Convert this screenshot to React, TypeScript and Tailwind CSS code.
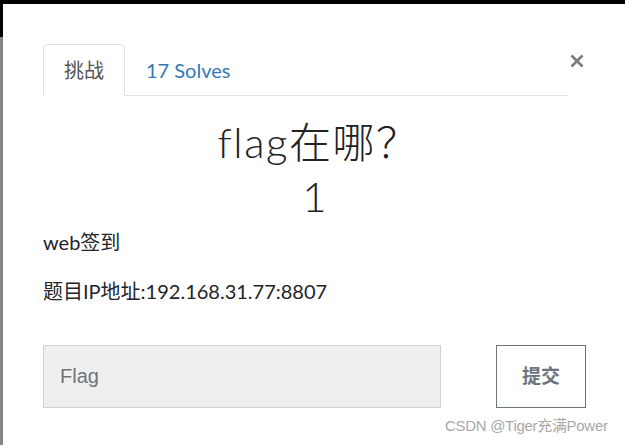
const SANS = "font-['Lato','Noto_Sans_CJK_SC',sans-serif]";

function CloseIcon() {
  return (
    <svg width="14" height="14" viewBox="0 0 14 14" className="block">
      <path d="M1.5 1.5 L12.5 12.5 M12.5 1.5 L1.5 12.5" stroke="#7a7a7a" strokeWidth="2.6" strokeLinecap="butt" />
    </svg>
  );
}

export default function App() {
  return (
    <div className={`relative flex h-[445px] w-[625px] flex-col overflow-hidden bg-white ${SANS}`}>
      <div className="h-[4px] bg-black" />
      <div className="flex flex-1">
        <div className="flex w-[3px] flex-col">
          <div className="h-[33px] bg-black" />
          <div className="flex-1 bg-[#858585]" />
        </div>

        <div className="w-[583px] pl-[40px] pt-[40px]">
          <div className="flex items-start">
            <ul className="flex w-[525px] border-b border-[#dee2e6] text-[20px]">
              <li className="-mb-px flex h-[52px] items-center rounded-t-[5px] border border-[#dee2e6] border-b-white bg-white px-[20px] text-[#555]">
                挑战
              </li>
              <li className="flex h-[51px] items-center px-[21px] text-[#337ab7]">17 Solves</li>
            </ul>
            <button className="ml-[2px] mt-[10px] flex h-[14px] w-[14px] items-center justify-center">
              <CloseIcon />
            </button>
          </div>

          <h2 className="mt-[22px] pl-[8px] text-center text-[42px] font-light leading-[48px] tracking-[1.5px] text-[#222]">
            flag在哪？
          </h2>
          <h3 className="mt-[6px] text-center text-[42px] font-light leading-[48px] text-[#222]">1</h3>

          <p className="mt-[8px] text-[20px] leading-[28px] text-[#212529]">web签到</p>
          <p className="mt-[21px] text-[20px] leading-[28px] text-[#212529]">题目IP地址:192.168.31.77:8807</p>

          <div className="mt-[40px] flex items-start">
            <input
              placeholder="Flag"
              className="h-[63px] w-[398px] border border-[#d2d2d2] bg-[#efefef] px-[16px] text-[20px] text-[#555] outline-none placeholder:text-[#6c757d] font-['Liberation_Sans',sans-serif]"
            />
            <button className="ml-[55px] flex h-[63px] w-[90px] items-center justify-center border border-[#6c757d] bg-white text-[19px] font-bold text-[#6c757d]">
              提交
            </button>
          </div>
        </div>
      </div>

      <div className="absolute left-[445px] top-[415px] text-[15px] tracking-[-0.3px] text-[#a8a8a8] font-['Liberation_Sans','Noto_Sans_CJK_SC',sans-serif]">
        CSDN @Tiger充满Power
      </div>
    </div>
  );
}
